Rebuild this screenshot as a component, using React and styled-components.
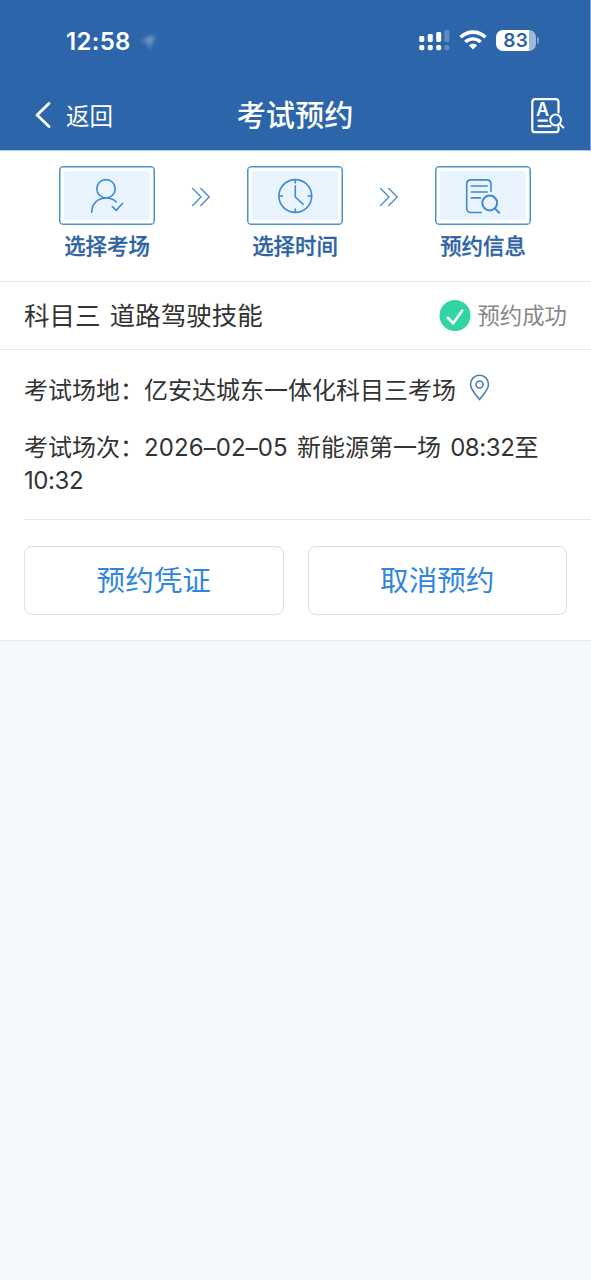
import React from "react";
import styled, { createGlobalStyle } from "styled-components";

const GlobalStyle = createGlobalStyle`
  * {
    box-sizing: border-box;
  }
  body {
    margin: 0;
    background-color: #f4f8fa;
    font-family: Inter, "Noto Sans CJK SC", sans-serif;
    color: #333;
  }
`;

const Header = styled.header`
  height: 151px;
  background-color: #2c65a9;
  border-right: 1px solid #7ba6dc;
  border-bottom: 1px solid #a9c8ec;
  color: #fff;
`;

const StatusBar = styled.div`
  height: 80px;
  padding: 0 51px 0 66px;
  display: flex;
  align-items: center;
  justify-content: space-between;
`;

const Clock = styled.div`
  display: flex;
  align-items: center;
  gap: 7px;
  padding-top: 3px;
  font-size: 24px;
  font-weight: 600;
  letter-spacing: 0.3px;
  line-height: 30px;
`;

const BlurredArrow = styled.svg`
  filter: blur(2px);
  opacity: 0.4;
`;

const NavBar = styled.nav`
  height: 70px;
  padding: 0 24px 0 34px;
  display: grid;
  grid-template-columns: 1fr auto 1fr;
  align-items: center;
`;

const Back = styled.div`
  display: flex;
  align-items: center;
  gap: 15px;
  font-size: 23.5px;
  line-height: 34px;
`;

const BackLabel = styled.span`
  padding-top: 3px;
`;

const Title = styled.h1`
  margin: 2px 10px 0 0;
  font-size: 29.2px;
  font-weight: 500;
  line-height: 42px;
`;

const NavIcon = styled.svg`
  justify-self: end;
`;

const Steps = styled.section`
  height: 131px;
  padding: 15px 1px 0 0;
  display: flex;
  justify-content: center;
  background-color: #fff;
  border-bottom: 1px solid #e8e8e8;
`;

const Step = styled.div`
  width: 96px;
  display: flex;
  flex-direction: column;
  align-items: center;
`;

const StepBox = styled.div`
  width: 96px;
  height: 59px;
  padding: 4px;
  border: 1px solid #4a90d2;
  border-radius: 4px;
  box-shadow: inset 0 0 0 0.5px #4a90d2;
`;

const StepFill = styled.div`
  height: 100%;
  display: flex;
  align-items: center;
  justify-content: center;
  background-color: #eaf4fe;
  border-radius: 3px;
`;

const StepLabel = styled.div`
  margin-top: 5px;
  font-size: 21.4px;
  font-weight: 500;
  line-height: 32px;
  color: #2e64a4;
  -webkit-text-stroke: 0.3px #2e64a4;
  white-space: nowrap;
`;

const StepArrow = styled.div`
  width: 92px;
  height: 61px;
  display: flex;
  align-items: center;
  justify-content: center;
`;

const Card = styled.section`
  background-color: #fff;
  border-bottom: 1px solid #e6eaec;
`;

const SubjectRow = styled.div`
  height: 68px;
  padding: 0 24px;
  display: flex;
  align-items: center;
  justify-content: space-between;
  border-bottom: 1px solid #e8e8e8;
`;

const Subject = styled.div`
  font-size: 25.5px;
  line-height: 36px;
  word-spacing: 2px;
`;

const Result = styled.div`
  display: flex;
  align-items: center;
  gap: 6px;
  font-size: 22.4px;
  line-height: 32px;
  color: #888;
`;

const Info = styled.div`
  height: 170px;
  margin-left: 24px;
  padding: 24px 24px 0 0;
  border-bottom: 1px solid #e8e8e8;
`;

const InfoLine = styled.div`
  display: flex;
  align-items: center;
  margin-bottom: 24px;
  font-size: 24px;
  line-height: 33px;
`;

const InfoText = styled.div`
  font-size: 24px;
  line-height: 33px;
  word-spacing: 2.4px;
`;

const DateText = styled.span`
  letter-spacing: 0.1px;
`;

const TimeText = styled.span`
  letter-spacing: -0.4px;
`;

const Pin = styled.svg`
  margin: -6px 0 0 13px;
`;

const Actions = styled.div`
  padding: 26px 24px 25px;
  display: grid;
  grid-template-columns: 1fr 1fr;
  gap: 24px;
`;

const ActionButton = styled.button`
  height: 69px;
  padding: 1px 0 0;
  background-color: #fff;
  border: 1px solid #dfdfdf;
  border-radius: 8px;
  font-family: inherit;
  font-size: 28.6px;
  line-height: 40px;
  color: #2f86e0;
`;

const Signal = () => (
  <svg width="31" height="22" viewBox="0 0 31 22" fill="#fff">
    <rect x="0.3" y="7" width="5" height="6" rx="1.4" />
    <rect x="8.8" y="5" width="5" height="8" rx="1.4" />
    <rect x="17.2" y="3" width="5" height="10" rx="1.4" />
    <rect x="25.4" y="1" width="5" height="12" rx="1.4" opacity="0.25" />
    <rect x="0.3" y="16" width="5" height="5.2" rx="1.6" />
    <rect x="8.8" y="16" width="5" height="5.2" rx="1.6" />
    <rect x="17.2" y="16" width="5" height="5.2" rx="1.6" />
    <rect x="25.4" y="16" width="5" height="5.2" rx="1.6" opacity="0.25" />
  </svg>
);

const Wifi = () => (
  <svg width="28" height="20" viewBox="0 0 28 20" fill="none" stroke="#fff">
    <path d="M1.6 7.2C8.6 0.4 19.4 0.4 26.4 7.2" strokeWidth="3.6" />
    <path d="M6.3 12C10.7 7.8 17.3 7.8 21.7 12" strokeWidth="3.4" />
    <path d="M9.8 15.5C12.2 13.1 15.8 13.1 18.2 15.5L14 19.6Z" fill="#fff" stroke="none" />
  </svg>
);

const Indicators = styled.div`
  display: flex;
  align-items: center;
  gap: 9px;
`;

const Battery = styled.div`
  display: flex;
  align-items: center;
  gap: 1px;
`;

const BatteryBody = styled.div`
  width: 39.5px;
  height: 21px;
  border-radius: 7px;
  background: linear-gradient(to right, #fff 83%, #9fb9d9 83%);
  color: #2c5f9f;
  font-size: 19px;
  font-weight: 600;
  letter-spacing: 0.4px;
  line-height: 21px;
  text-align: center;
`;

const BatteryNub = styled.div`
  width: 2.5px;
  height: 7px;
  border-radius: 0 3px 3px 0;
  background-color: #7d9fca;
`;

const UserIcon = () => (
  <svg width="40" height="40" viewBox="0 0 40 40" fill="none" stroke="#3d8ad4" strokeWidth="1.6" strokeLinecap="round">
    <circle cx="19" cy="12.8" r="9.2" />
    <path d="M4.7 36.3C4.7 27.5 11 22 19 22C23 22 26.6 23.3 29.2 25.9" />
    <path d="M25.3 30.6L29.3 34.3L35.6 27.3" />
  </svg>
);

const ClockIcon = () => (
  <svg width="40" height="40" viewBox="0 0 40 40" fill="none" stroke="#3d8ad4" strokeWidth="1.6" strokeLinecap="round">
    <circle cx="20.3" cy="20" r="16.4" />
    <path d="M20.3 9.8V21L28 28.2" />
    <path d="M20.3 3.8V7M20.3 33V36.2M4 20H7.6M33 20H36.6" />
  </svg>
);

const DocIcon = () => (
  <svg width="40" height="40" viewBox="0 0 40 40" fill="none" stroke="#3d8ad4" strokeWidth="1.6" strokeLinecap="round">
    <path d="M18.3 36.5H8Q3.7 36.5 3.7 32.2V8.2Q3.7 3.9 8 3.9H23.7Q28 3.9 28 8.2V15.2" />
    <path d="M8.3 10H24.2M8.3 16H24.2M8.3 21.9H17.5" />
    <circle cx="26.7" cy="27" r="7.4" strokeWidth="2" />
    <path d="M32 32.6L36.2 36.7" strokeWidth="2" />
  </svg>
);

const steps = [
  { label: "选择考场", icon: <UserIcon /> },
  { label: "选择时间", icon: <ClockIcon /> },
  { label: "预约信息", icon: <DocIcon /> },
];

const App = () => {
  return (
    <>
      <GlobalStyle />
      <Header>
        <StatusBar>
          <Clock>
            12:58
            <BlurredArrow width="20" height="20" viewBox="0 0 20 20">
              <path d="M2 9L17 3L11 18L10 10Z" fill="#fff" />
            </BlurredArrow>
          </Clock>
          <Indicators>
            <Signal />
            <Wifi />
            <Battery>
              <BatteryBody>83</BatteryBody>
              <BatteryNub />
            </Battery>
          </Indicators>
        </StatusBar>
        <NavBar>
          <Back>
            <svg width="17" height="28" viewBox="0 0 17 28" fill="none" stroke="#fff" strokeWidth="2.8" strokeLinecap="round" strokeLinejoin="round">
              <path d="M15 2.5L3 14L15 25.5" />
            </svg>
            <BackLabel>返回</BackLabel>
          </Back>
          <Title>考试预约</Title>
          <NavIcon width="36" height="37" viewBox="0 0 36 37" fill="none" stroke="#fff" strokeWidth="2.2" strokeLinecap="round">
            <path d="M28.5 15.5V5Q28.5 2.2 25.7 2.2H5.1Q2.3 2.2 2.3 5V32.4Q2.3 35.2 5.1 35.2H25.7Q28.5 35.2 28.5 32.8V30" />
            <text x="12.6" y="19.2" textAnchor="middle" fontSize="18" fontWeight="600" fill="#fff" stroke="none">
              A
            </text>
            <path d="M8.5 23.7H17M8.5 29.2H20.5" />
            <circle cx="25.6" cy="23" r="5.4" strokeWidth="2" />
            <path d="M29.6 27L33.4 30.6" strokeWidth="2" />
          </NavIcon>
        </NavBar>
      </Header>

      <Steps>
        {steps.map((step, index) => {
          return (
            <React.Fragment key={step.label}>
              {index > 0 && (
                <StepArrow>
                  <svg width="20" height="20" viewBox="0 0 20 20" fill="none" stroke="#4a90d2" strokeWidth="1.4" strokeLinecap="round">
                    <path d="M1.6 1.5L10 10L1.6 18.5M9.8 1.5L18.2 10L9.8 18.5" />
                  </svg>
                </StepArrow>
              )}
              <Step>
                <StepBox>
                  <StepFill>{step.icon}</StepFill>
                </StepBox>
                <StepLabel>{step.label}</StepLabel>
              </Step>
            </React.Fragment>
          );
        })}
      </Steps>

      <Card>
        <SubjectRow>
          <Subject>科目三 道路驾驶技能</Subject>
          <Result>
            <svg width="32" height="32" viewBox="0 0 32 32" fill="none">
              <circle cx="16" cy="15.5" r="15.5" fill="#30d5a3" />
              <path d="M8 17L14.2 23.2L23.8 9.8" stroke="#fff" strokeWidth="2.5" />
            </svg>
            预约成功
          </Result>
        </SubjectRow>
        <Info>
          <InfoLine>
            考试场地：亿安达城东一体化科目三考场
            <Pin width="21" height="27" viewBox="0 0 21 27" fill="none" stroke="#4b7fb5" strokeWidth="1.6">
              <path d="M10.5 25.5C6.5 20.5 1.5 15.5 1.5 10.2A9 9 0 0 1 19.5 10.2C19.5 15.5 14.5 20.5 10.5 25.5Z" />
              <circle cx="10.5" cy="10.5" r="3.5" />
            </Pin>
          </InfoLine>
          <InfoText>
            考试场次：<DateText>2026–02–05</DateText> 新能源第一场 <TimeText>08:32</TimeText>至
            <TimeText>10:32</TimeText>
          </InfoText>
        </Info>
        <Actions>
          <ActionButton>预约凭证</ActionButton>
          <ActionButton>取消预约</ActionButton>
        </Actions>
      </Card>
    </>
  );
};

export default App;
